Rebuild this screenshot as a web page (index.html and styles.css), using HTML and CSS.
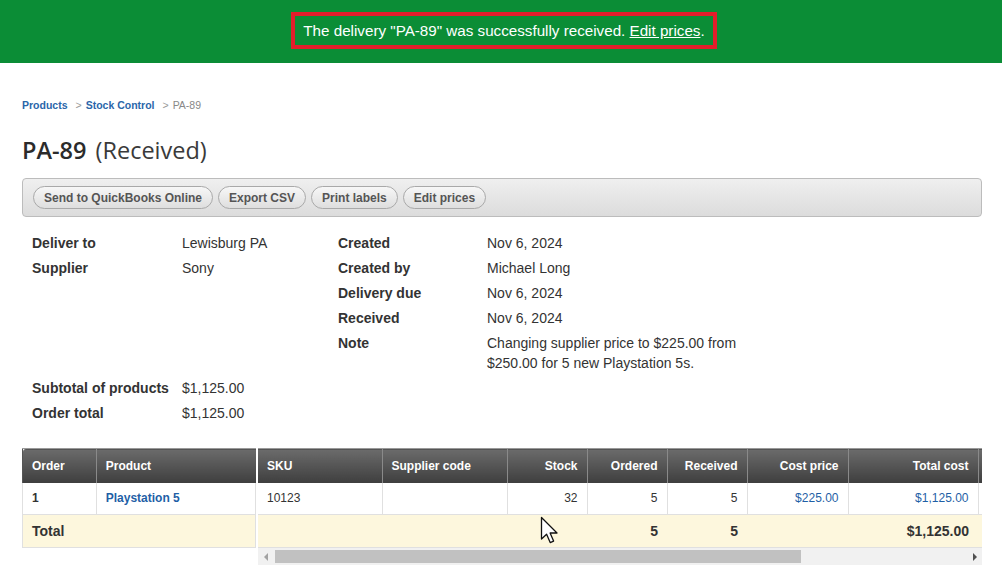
FILE: index.html
```html
<!DOCTYPE html>
<html lang="en">
<head>
<meta charset="utf-8">
<title>PA-89 (Received)</title>
<link rel="stylesheet" href="styles.css">
</head>
<body>
<div class="flash">
  <div class="flash-box">The delivery "PA-89" was successfully received. <a href="#">Edit prices</a>.</div>
</div>

<div class="page">
  <nav class="crumbs">
    <a href="#">Products</a>
    <span class="sep">&gt;</span>
    <a href="#">Stock Control</a>
    <span class="sep">&gt;</span>
    <span class="here">PA-89</span>
  </nav>

  <h1 class="title"><span class="code">PA-89</span> <span class="state">(Received)</span></h1>

  <div class="toolbar">
    <button class="pill">Send to QuickBooks Online</button>
    <button class="pill">Export CSV</button>
    <button class="pill">Print labels</button>
    <button class="pill">Edit prices</button>
  </div>

  <div class="details">
    <dl class="facts left">
      <dt>Deliver to</dt><dd>Lewisburg PA</dd>
      <dt>Supplier</dt><dd>Sony</dd>
    </dl>
    <dl class="facts right">
      <dt>Created</dt><dd>Nov 6, 2024</dd>
      <dt>Created by</dt><dd>Michael Long</dd>
      <dt>Delivery due</dt><dd>Nov 6, 2024</dd>
      <dt>Received</dt><dd>Nov 6, 2024</dd>
      <dt>Note</dt><dd class="note">Changing supplier price to $225.00 from $250.00 for 5 new Playstation 5s.</dd>
    </dl>
  </div>

  <dl class="facts totals">
    <dt>Subtotal of products</dt><dd>$1,125.00</dd>
    <dt>Order total</dt><dd>$1,125.00</dd>
  </dl>

  <div class="lines">
    <table class="grid frozen">
      <thead>
        <tr><th class="c-order">Order</th><th class="c-product">Product</th></tr>
      </thead>
      <tbody>
        <tr><td class="strong">1</td><td><a href="#">Playstation 5</a></td></tr>
        <tr class="sum"><td colspan="2">Total</td></tr>
      </tbody>
    </table>

    <div class="scroller">
      <div class="viewport">
        <table class="grid wide">
          <thead>
            <tr>
              <th class="c-sku">SKU</th>
              <th class="c-supp">Supplier code</th>
              <th class="num c-stock">Stock</th>
              <th class="num c-ord">Ordered</th>
              <th class="num c-rec">Received</th>
              <th class="num c-cost">Cost price</th>
              <th class="num c-total">Total cost</th>
              <th class="c-extra">&nbsp;</th>
            </tr>
          </thead>
          <tbody>
            <tr>
              <td>10123</td>
              <td></td>
              <td class="num">32</td>
              <td class="num">5</td>
              <td class="num">5</td>
              <td class="num"><a href="#">$225.00</a></td>
              <td class="num"><a href="#">$1,125.00</a></td>
              <td></td>
            </tr>
            <tr class="sum">
              <td></td>
              <td></td>
              <td></td>
              <td class="num">5</td>
              <td class="num">5</td>
              <td></td>
              <td class="num">$1,125.00</td>
              <td></td>
            </tr>
          </tbody>
        </table>
      </div>
      <div class="hbar">
        <span class="arrow arrow-l"></span>
        <div class="track"><div class="thumb"></div></div>
        <span class="arrow arrow-r"></span>
      </div>
    </div>
  </div>
</div>

<svg class="pointer" width="22" height="30" viewBox="0 0 22 30" aria-hidden="true">
  <path d="M1.5 1.5 L1.5 23 L6.6 18.2 L10.2 26.6 L13.6 25.1 L10.1 17 L17 17 Z" fill="#fff" stroke="#111" stroke-width="1.3" stroke-linejoin="round"/>
</svg>
</body>
</html>
```

FILE: styles.css
```css
* { box-sizing: border-box; }

html, body {
  margin: 0;
  padding: 0;
  background: #fff;
}

body {
  font-family: "Liberation Sans", Arial, sans-serif;
  color: #333;
  position: relative;
  min-height: 586px;
}

a { color: #1f5fa6; text-decoration: none; }

/* success banner */
.flash {
  height: 63px;
  background: #0b8d36;
  display: flex;
  align-items: flex-start;
  justify-content: center;
  padding-top: 12px;
  padding-left: 6px;
}

.flash-box {
  width: 426px;
  height: 37px;
  border: 4px solid #e21d2b;
  color: #fff;
  font-size: 15.2px;
  line-height: 29px;
  text-align: center;
  white-space: nowrap;
}

.flash-box a {
  color: #fff;
  text-decoration: underline;
}

/* page body */
.page {
  padding: 35px 20px 0 22px;
}

.crumbs {
  font-size: 10.5px;
  line-height: 14px;
  display: flex;
  gap: 4px;
  align-items: baseline;
}

.crumbs a { font-weight: bold; color: #2a66aa; }
.crumbs .sep { color: #999; margin-left: 4px; }
.crumbs .here { color: #888; }

.title {
  margin: 22px 0 0;
  font-family: "Open Sans", "Liberation Sans", sans-serif;
  font-size: 23.5px;
  line-height: 32px;
  font-weight: 400;
  color: #333;
}

.title .code { font-weight: 600; color: #2b2b2b; }
.title .state { color: #3a3a3a; margin-left: 3px; }

.toolbar {
  margin-top: 12px;
  height: 39px;
  border: 1px solid #bcbcbc;
  border-radius: 4px;
  background: linear-gradient(#efefef, #dcdcdc);
  display: flex;
  align-items: center;
  gap: 5px;
  padding: 0 0 0 10px;
}

.pill {
  height: 23px;
  padding: 0 10px;
  border: 1px solid #a9a9a9;
  border-radius: 12px;
  background: linear-gradient(#f7f7f7, #dedede);
  font-family: "Liberation Sans", Arial, sans-serif;
  font-size: 12px;
  font-weight: bold;
  color: #555;
  line-height: 20px;
  cursor: pointer;
}

/* delivery facts */
.details {
  display: flex;
  margin-top: 14px;
  padding-left: 10px;
}

.facts {
  margin: 0;
  display: grid;
  grid-template-columns: 150px auto;
  font-size: 14px;
  line-height: 25px;
  align-content: start;
}

.facts dt { font-weight: bold; color: #333; }
.facts dd { margin: 0; color: #333; }

.facts.left { width: 306px; grid-template-columns: 150px 156px; }
.facts.right { grid-template-columns: 149px 262px; }

.facts dd.note { line-height: 20px; padding-top: 2px; }

.facts.totals {
  margin-top: 3px;
  padding-left: 10px;
}

/* order lines */
.lines {
  margin-top: 22px;
  display: flex;
  gap: 2px;
  align-items: flex-start;
}

.grid {
  border-collapse: collapse;
  font-size: 12px;
}

.grid th {
  height: 34px;
  padding: 0 9px;
  text-align: left;
  font-weight: bold;
  color: #fff;
  background: linear-gradient(#6b6b6b, #3e3e3e);
  border-left: 1px solid #8a8a8a;
  border-top: 1px solid #999;
  white-space: nowrap;
}

.grid th:first-child { border-left-color: #555; }

.grid td {
  height: 32px;
  padding: 0 9px;
  border: 1px solid #e0e0e0;
  border-top: none;
  color: #333;
  white-space: nowrap;
}

.grid td.strong { font-weight: bold; }
.frozen td a { font-weight: bold; }

.grid .num { text-align: right; }

.grid tr.sum td {
  height: 33px;
  background: #fdf7dd;
  font-weight: bold;
  font-size: 14px;
}

.wide tr.sum td { border-left: none; border-right: none; }

.frozen { width: 234px; }
.frozen .c-order { width: 74px; }
.frozen .c-product { width: 160px; }
.frozen th:first-child { border-top-left-radius: 3px; }

.scroller { width: 724px; }

.viewport {
  overflow: hidden;
}

.wide { width: 760px; table-layout: fixed; }
.wide .c-sku { width: 124px; }
.wide .c-supp { width: 125px; }
.wide .c-stock { width: 80px; }
.wide .c-ord { width: 80px; }
.wide .c-rec { width: 80px; }
.wide .c-cost { width: 101px; }
.wide .c-total { width: 130px; }
.wide .c-extra { width: 40px; }
.wide th:first-child { border-left: none; }
.wide td:first-child { border-left: none; }

/* horizontal scrollbar */
.hbar {
  height: 17px;
  background: #f1f1f1;
  display: flex;
  align-items: center;
}

.track {
  flex: 1;
  height: 13px;
  position: relative;
}

.thumb {
  width: 526px;
  height: 100%;
  margin-left: 2px;
  background: #c1c1c1;
}

.arrow {
  width: 15px;
  height: 17px;
  display: flex;
  align-items: center;
  justify-content: center;
}

.arrow::before {
  content: "";
  border-top: 4px solid transparent;
  border-bottom: 4px solid transparent;
}

.arrow-l::before { border-right: 4px solid #a3a3a3; }
.arrow-r::before { border-left: 4px solid #505050; }

/* mouse pointer sitting over the grid */
.pointer {
  position: absolute;
  left: 540px;
  top: 516px;
}
```
